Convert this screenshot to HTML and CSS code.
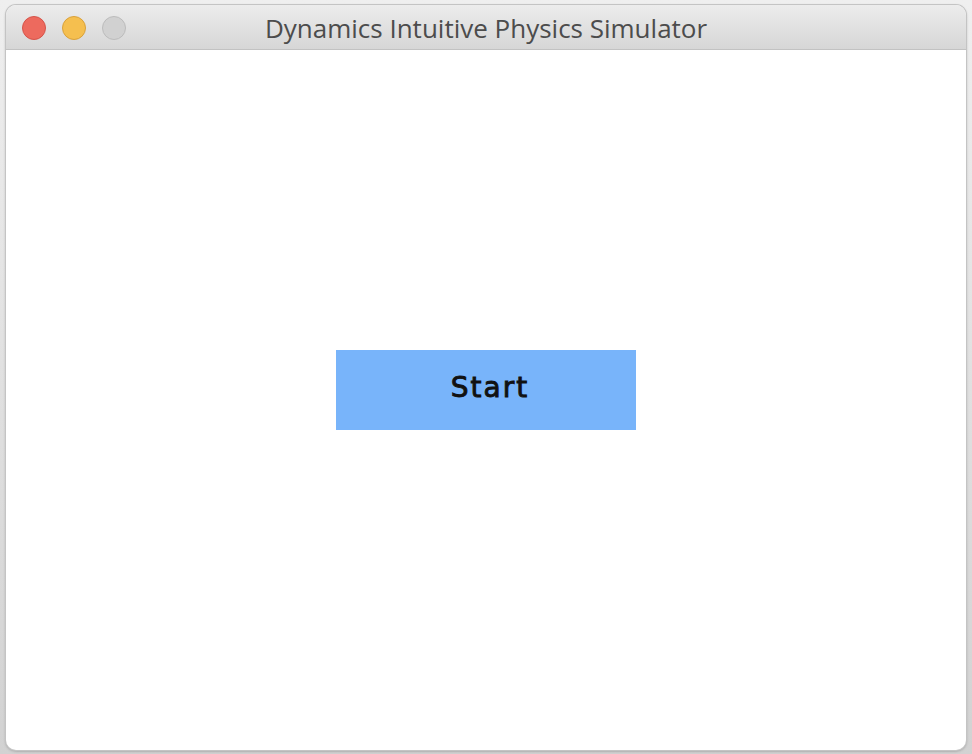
FILE: index.html
```html
<!DOCTYPE html>
<html>
<head>
<meta charset="utf-8">
<link rel="stylesheet" href="styles.css">
</head>
<body>
<div class="window">
  <div class="titlebar">
    <div class="lights">
      <span class="light red"></span>
      <span class="light yellow"></span>
      <span class="light gray"></span>
    </div>
    <div class="title">Dynamics Intuitive Physics Simulator</div>
  </div>
  <div class="content">
    <button class="start">Start</button>
  </div>
</div>
</body>
</html>
```
FILE: styles.css
```css
html, body {
  margin: 0;
  padding: 0;
  width: 972px;
  height: 754px;
  overflow: hidden;
  background: linear-gradient(#efefef, #d2d2d2);
}
body {
  padding: 5px 6px 4px 6px;
  box-sizing: border-box;
}
.window {
  width: 960px;
  height: 745px;
  border-radius: 10px;
  background: #fff;
  box-shadow: 0 0 0 1px #c4c4c4, 0 1px 3px rgba(0,0,0,0.35);
  display: flex;
  flex-direction: column;
  overflow: hidden;
}
.titlebar {
  height: 44px;
  flex: none;
  background: linear-gradient(#ececec, #d6d6d6);
  border-bottom: 1px solid #c2c2c2;
  position: relative;
  display: flex;
  align-items: center;
  justify-content: center;
}
.lights {
  position: absolute;
  left: 16px;
  top: 11px;
  display: flex;
  gap: 16px;
}
.light {
  width: 24px;
  height: 24px;
  border-radius: 50%;
  box-sizing: border-box;
}
.red { background: #ed6a5e; border: 1px solid #d5544a; }
.yellow { background: #f5bf4f; border: 1px solid #d9a13b; }
.gray { background: #d1d1d1; border: 1px solid #bcbcbc; }
.title {
  font-family: "Open Sans", "Liberation Sans", sans-serif;
  font-size: 26px;
  color: #4c4c4c;
  margin-top: 1px;
}
.content {
  flex: 1;
  display: flex;
  align-items: flex-start;
  justify-content: center;
}
.start {
  margin-top: 300px;
  width: 300px;
  height: 80px;
  background: #78b4fa;
  border: none;
  font-family: "DejaVu Sans", sans-serif;
  font-weight: normal;
  font-size: 28px;
  -webkit-text-stroke: 0.9px #111;
  color: #111;
  padding: 0 0 5px 8px;
  letter-spacing: 2px;
}
```
